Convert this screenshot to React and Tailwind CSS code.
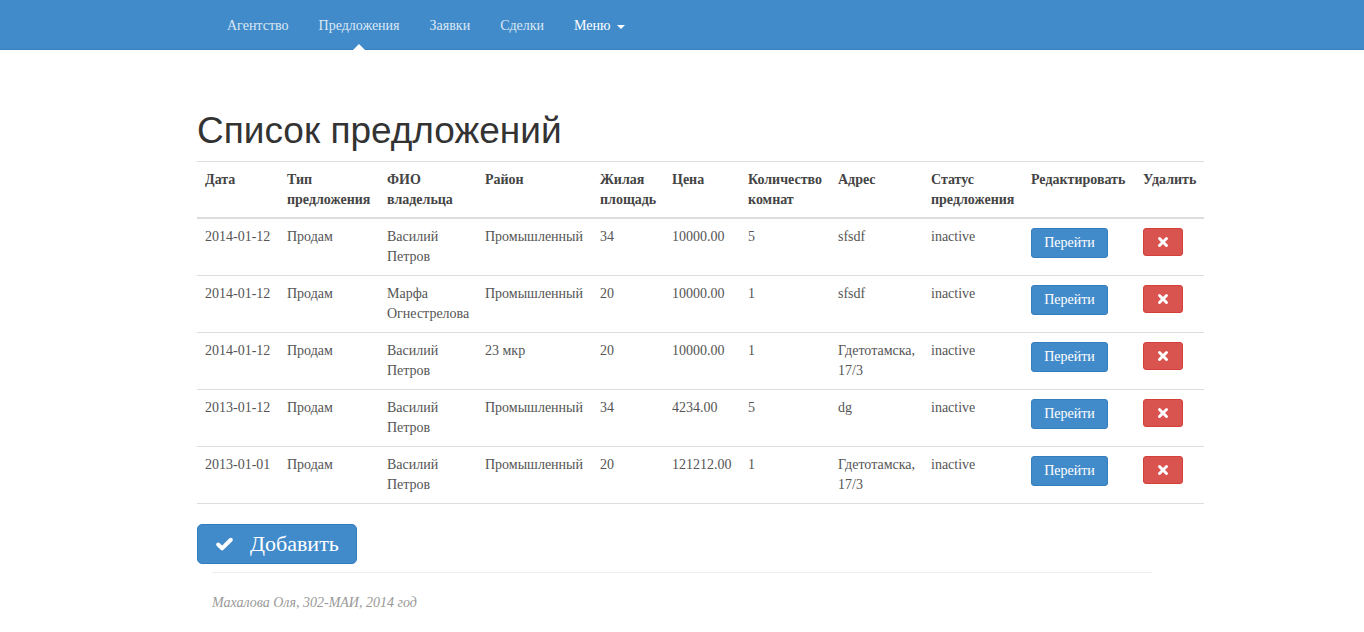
import { Check, X } from "lucide-react";

const rows = [
    { date: "2014-01-12", type: "Продам", fio: ["Василий", "Петров"], area: "Промышленный", sq: "34", price: "10000.00", rooms: "5", addr: ["sfsdf"], status: "inactive" },
    { date: "2014-01-12", type: "Продам", fio: ["Марфа", "Огнестрелова"], area: "Промышленный", sq: "20", price: "10000.00", rooms: "1", addr: ["sfsdf"], status: "inactive" },
    { date: "2014-01-12", type: "Продам", fio: ["Василий", "Петров"], area: "23 мкр", sq: "20", price: "10000.00", rooms: "1", addr: ["Гдетотамска,", "17/3"], status: "inactive" },
    { date: "2013-01-12", type: "Продам", fio: ["Василий", "Петров"], area: "Промышленный", sq: "34", price: "4234.00", rooms: "5", addr: ["dg"], status: "inactive" },
    { date: "2013-01-01", type: "Продам", fio: ["Василий", "Петров"], area: "Промышленный", sq: "20", price: "121212.00", rooms: "1", addr: ["Гдетотамска,", "17/3"], status: "inactive" },
];

const headers = [
    ["Дата", 82], ["Тип предложения", 100], ["ФИО владельца", 98], ["Район", 115],
    ["Жилая площадь", 72], ["Цена", 76], ["Количество комнат", 90], ["Адрес", 93],
    ["Статус предложения", 100], ["Редактировать", 112], ["Удалить", 69],
];

function Cell({ w, children }) {
    return (
        <td className="px-2 pt-[8px] pb-[8px] align-top" style={{ width: w }}>
            {children}
        </td>
    );
}

export default function App() {
    return (
        <div className="min-h-[632px] bg-white text-[#555] text-[14px] leading-5" style={{ fontFamily: '"Liberation Serif", serif' }}>
            <nav className="h-[50px] bg-[#428bca] border-b border-[#3a80bd]">
                <ul className="flex pl-[212px] h-full text-[14px]">
                    {["Агентство", "Предложения", "Заявки", "Сделки"].map((n, i) => (
                        <li key={n} className="relative px-[15px] pt-[16px] text-[#dce8f4]">
                            {n}
                            {i === 1 && (
                                <span className="absolute left-1/2 -translate-x-1/2 bottom-[-1px] w-0 h-0 border-x-[6px] border-x-transparent border-b-[6px] border-b-white" />
                            )}
                        </li>
                    ))}
                    <li className="px-[15px] pt-[16px] text-white flex items-start gap-[6px]">
                        Меню
                        <span className="mt-[9px] w-0 h-0 border-x-[4px] border-x-transparent border-t-[4px] border-t-white" />
                    </li>
                </ul>
            </nav>

            <div className="pl-[197px]">
                <h1 className="mt-[61px] mb-[10px] text-[37px] leading-[40px] text-[#333]" style={{ fontFamily: '"Liberation Sans", Arial, sans-serif' }}>
                    Список предложений
                </h1>
                <table className="w-[1007px] border-collapse table-fixed">
                    <thead>
                        <tr className="border-t border-b-2 border-[#ddd]">
                            {headers.map(([h, w]) => (
                                <th key={h} className="px-2 pt-[8px] pb-[7px] text-left align-bottom font-bold text-[#444]" style={{ width: w }}>
                                    <div className="min-h-[40px]">{h}</div>
                                </th>
                            ))}
                        </tr>
                    </thead>
                    <tbody>
                        {rows.map((r, i) => (
                            <tr key={i} className="border-b border-[#ddd] h-[57px]">
                                <Cell>{r.date}</Cell>
                                <Cell>{r.type}</Cell>
                                <Cell>{r.fio.map(l => <div key={l}>{l}</div>)}</Cell>
                                <Cell>{r.area}</Cell>
                                <Cell>{r.sq}</Cell>
                                <Cell>{r.price}</Cell>
                                <Cell>{r.rooms}</Cell>
                                <Cell>{r.addr.map(l => <div key={l}>{l}</div>)}</Cell>
                                <Cell>{r.status}</Cell>
                                <Cell>
                                    <button className="mt-[1px] h-[30px] w-[77px] rounded-[3px] bg-[#428bca] border border-[#357ebd] text-white text-[14px]">
                                        Перейти
                                    </button>
                                </Cell>
                                <Cell>
                                    <button className="mt-[1px] h-[28px] w-[40px] rounded-[3px] bg-[#d9534f] border border-[#d43f3a] text-white flex items-center justify-center">
                                        <X size={14} strokeWidth={5} />
                                    </button>
                                </Cell>
                            </tr>
                        ))}
                    </tbody>
                </table>

                <button className="mt-[20px] h-[40px] w-[160px] rounded-[5px] bg-[#428bca] border border-[#357ebd] text-white text-[22px] flex items-center gap-[16px] pl-[17px]">
                    <Check size={19} strokeWidth={5} />
                    Добавить
                </button>

                <div className="ml-[15px] w-[940px] mt-[8px] border-t border-[#eee] pt-[20px] italic text-[#999] text-[14px]">
                    Махалова Оля, 302-МАИ, 2014 год
                </div>
            </div>
        </div>
    );
}
